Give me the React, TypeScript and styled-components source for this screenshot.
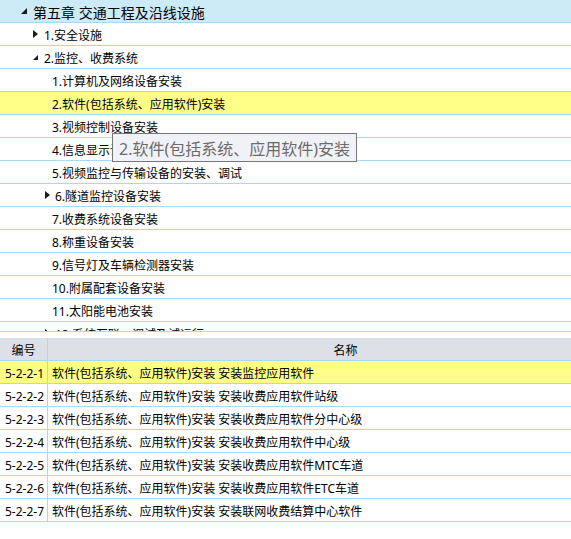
import React from "react";
import styled, { createGlobalStyle } from "styled-components";

const GlobalStyle = createGlobalStyle`
  html, body { margin: 0; padding: 0; background: #ffffff; }
  body {
    font-family: "Noto Sans", "Noto Sans CJK SC", sans-serif;
    color: #000;
  }
`;

const LINE = "#a9d7f4";

const Page = styled.div`
  position: relative;
  width: 571px;
  height: 539px;
  overflow: hidden;
  background: #fff;
`;

const TreePanel = styled.div`
  height: 331px;
  overflow: hidden;
  border-bottom: 1px solid ${LINE};
`;

const TreeRow = styled.div<{ $indent: number; $bg?: string; $big?: boolean }>`
  display: flex;
  align-items: center;
  height: 22px;
  border-bottom: 1px solid ${LINE};
  padding-left: ${(p) => p.$indent}px;
  background: ${(p) => p.$bg || "#ffffff"};
  font-size: ${(p) => (p.$big ? "14px" : "12px")};
  white-space: nowrap;
`;

const Toggle = styled.span<{ $w: number }>`
  display: inline-flex;
  align-items: center;
  width: ${(p) => p.$w}px;
  height: 22px;
  flex: none;
`;

const Label = styled.span`
  padding-top: 3px;
  line-height: 19px;
`;

const Splitter = styled.div`
  height: 6px;
  background: #ffffff;
`;

const Grid = styled.div`
  width: 643px;
`;

const GridRow = styled.div<{ $bg?: string }>`
  display: grid;
  grid-template-columns: 48px 1fr;
  height: 22px;
  border-bottom: 1px solid ${LINE};
  background: ${(p) => p.$bg || "#ffffff"};
  font-size: 12px;
  white-space: nowrap;
`;

const CodeCell = styled.div<{ $head?: boolean }>`
  display: flex;
  align-items: center;
  justify-content: ${(p) => (p.$head ? "center" : "flex-start")};
  padding-left: ${(p) => (p.$head ? 0 : 5)}px;
  padding-top: 3px;
  line-height: 19px;
  border-right: 1px solid ${LINE};
`;

const NameCell = styled.div<{ $head?: boolean }>`
  display: flex;
  align-items: center;
  justify-content: ${(p) => (p.$head ? "center" : "flex-start")};
  padding-left: ${(p) => (p.$head ? 0 : 4)}px;
  padding-top: 3px;
  line-height: 19px;
`;

const Tooltip = styled.div`
  position: absolute;
  left: 112px;
  top: 133px;
  height: 27px;
  padding: 0 6px;
  display: flex;
  align-items: center;
  background: #f1f2f7;
  border: 1px solid #767676;
  color: #6b6b6b;
  font-size: 16px;
  white-space: nowrap;
`;

const TooltipText = styled.span`
  padding-top: 2px;
  line-height: 24px;
`;

const Expanded = ({ size }: { size: number }) => (
  <svg width={size} height={size} viewBox={`0 0 ${size} ${size}`}>
    <polygon points={`${size},0 ${size},${size} 0,${size}`} fill="#1a1a1a" />
  </svg>
);

const Collapsed = () => (
  <svg width={5} height={8} viewBox="0 0 5 8">
    <polygon points="0,0 5,4 0,8" fill="#1a1a1a" />
  </svg>
);

type Node = {
  text: string;
  indent: number;
  toggleW?: number;
  state?: "open" | "closed";
  big?: boolean;
  bg?: string;
  tsize?: number;
};

const tree: Node[] = [
  { text: "第五章 交通工程及沿线设施", indent: 21, toggleW: 12, state: "open", big: true, bg: "#cdeaf7", tsize: 6 },
  { text: "1.安全设施", indent: 33, toggleW: 11, state: "closed" },
  { text: "2.监控、收费系统", indent: 33, toggleW: 11, state: "open", tsize: 5 },
  { text: "1.计算机及网络设备安装", indent: 52 },
  { text: "2.软件(包括系统、应用软件)安装", indent: 52, bg: "#ffff88" },
  { text: "3.视频控制设备安装", indent: 52 },
  { text: "4.信息显示设备安装", indent: 52 },
  { text: "5.视频监控与传输设备的安装、调试", indent: 52 },
  { text: "6.隧道监控设备安装", indent: 45, toggleW: 10, state: "closed" },
  { text: "7.收费系统设备安装", indent: 52 },
  { text: "8.称重设备安装", indent: 52 },
  { text: "9.信号灯及车辆检测器安装", indent: 52 },
  { text: "10.附属配套设备安装", indent: 52 },
  { text: "11.太阳能电池安装", indent: 52 },
  { text: "12.系统互联、调试及试运行", indent: 45, toggleW: 10, state: "closed" },
];

const P = "软件(包括系统、应用软件)安装 ";
const rows = [
  { code: "5-2-2-1", name: P + "安装监控应用软件", bg: "#ffff88" },
  { code: "5-2-2-2", name: P + "安装收费应用软件站级" },
  { code: "5-2-2-3", name: P + "安装收费应用软件分中心级" },
  { code: "5-2-2-4", name: P + "安装收费应用软件中心级" },
  { code: "5-2-2-5", name: P + "安装收费应用软件MTC车道" },
  { code: "5-2-2-6", name: P + "安装收费应用软件ETC车道" },
  { code: "5-2-2-7", name: P + "安装联网收费结算中心软件" },
];

export default function App() {
  return (
    <Page>
      <GlobalStyle />
      <TreePanel>
        {tree.map((n, i) => (
          <TreeRow key={i} $indent={n.indent} $bg={n.bg} $big={n.big}>
            {n.state && (
              <Toggle $w={n.toggleW || 10}>
                {n.state === "open" ? <Expanded size={n.tsize || 5} /> : <Collapsed />}
              </Toggle>
            )}
            <Label>{n.text}</Label>
          </TreeRow>
        ))}
      </TreePanel>
      <Splitter />
      <Grid>
        <GridRow $bg="#dde1e7">
          <CodeCell $head>编号</CodeCell>
          <NameCell $head>名称</NameCell>
        </GridRow>
        {rows.map((r) => (
          <GridRow key={r.code} $bg={r.bg}>
            <CodeCell>{r.code}</CodeCell>
            <NameCell>{r.name}</NameCell>
          </GridRow>
        ))}
      </Grid>
      <Tooltip>
        <TooltipText>2.软件(包括系统、应用软件)安装</TooltipText>
      </Tooltip>
    </Page>
  );
}
